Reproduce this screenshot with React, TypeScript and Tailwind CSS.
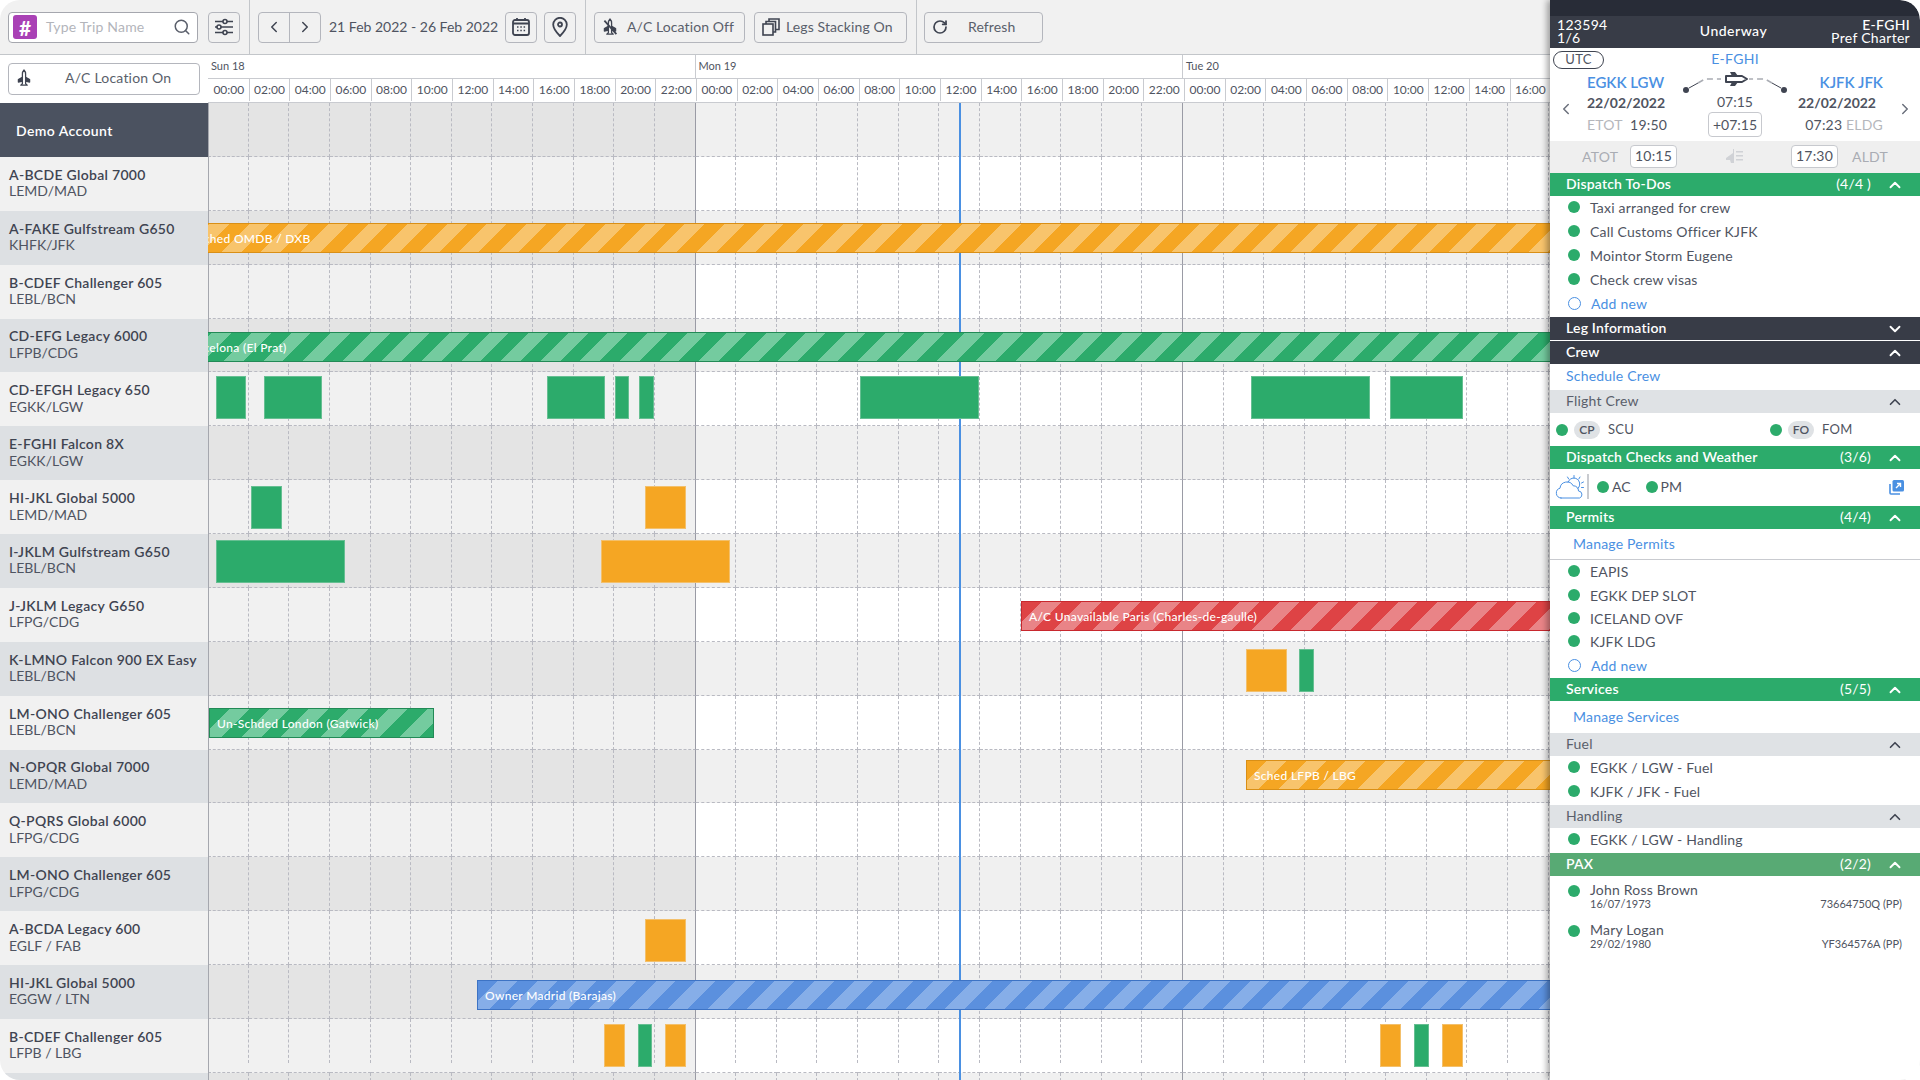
import React from 'react';
import { ChevronDown, ChevronLeft, ChevronRight, ChevronUp, RotateCw, Search } from 'lucide-react';

const aircraft = [
  ['A-BCDE Global 7000', 'LEMD/MAD'],
  ['A-FAKE Gulfstream G650', 'KHFK/JFK'],
  ['B-CDEF Challenger 605', 'LEBL/BCN'],
  ['CD-EFG Legacy 6000', 'LFPB/CDG'],
  ['CD-EFGH Legacy 650', 'EGKK/LGW'],
  ['E-FGHI Falcon 8X', 'EGKK/LGW'],
  ['HI-JKL Global 5000', 'LEMD/MAD'],
  ['I-JKLM Gulfstream G650', 'LEBL/BCN'],
  ['J-JKLM Legacy G650', 'LFPG/CDG'],
  ['K-LMNO Falcon 900 EX Easy', 'LEBL/BCN'],
  ['LM-ONO Challenger 605', 'LEBL/BCN'],
  ['N-OPQR Global 7000', 'LEMD/MAD'],
  ['Q-PQRS Global 6000', 'LFPG/CDG'],
  ['LM-ONO Challenger 605', 'LFPG/CDG'],
  ['A-BCDA Legacy 600', 'EGLF / FAB'],
  ['HI-JKL Global 5000', 'EGGW / LTN'],
  ['B-CDEF Challenger 605', 'LFPB / LBG'],
];

const hours = ['00:00', '02:00', '04:00', '06:00', '08:00', '10:00', '12:00', '14:00', '16:00', '18:00', '20:00', '22:00'];
const columns = Array.from({ length: 34 }, (_, i) => i);

const barStyles = {
  orange: 'bg-[repeating-linear-gradient(135deg,#f5a623_0,#f5a623_14px,#f8c46c_14px,#f8c46c_28px)] border-[#d98f16]',
  green: 'bg-[repeating-linear-gradient(135deg,#2cab6b_0,#2cab6b_14px,#74cb9f_14px,#74cb9f_28px)] border-[#228a56]',
  red: 'bg-[repeating-linear-gradient(135deg,#de4345_0,#de4345_14px,#e98487_14px,#e98487_28px)] border-[#c8282e]',
  blue: 'bg-[repeating-linear-gradient(135deg,#5b90de_0,#5b90de_14px,#86aee8_14px,#86aee8_28px)] border-[#3d73c4]',
};

const blockStyles = {
  orange: 'bg-[#f5a623] border-[#f3c06c]',
  green: 'bg-[#2cab6b] border-[#66bf92]',
};

type Bar = { x: number; w: number; y: number; color: keyof typeof barStyles; label: string };
type Block = { x: number; w: number; y: number; color: keyof typeof blockStyles };

// x is measured from the left of the schedule, y from the top of the row
const bars: Record<number, Bar[]> = {
  2: [{ x: -19, w: 1400, y: 12, color: 'orange', label: 'Sched OMDB / DXB' }],
  4: [{ x: -96, w: 1500, y: 13, color: 'green', label: 'Un-Schded Barcelona (El Prat)' }],
  9: [{ x: 813, w: 560, y: 13, color: 'red', label: 'A/C Unavailable Paris (Charles-de-gaulle)' }],
  11: [{ x: 1, w: 225, y: 12, color: 'green', label: 'Un-Schded London (Gatwick)' }],
  12: [{ x: 1038, w: 320, y: 10, color: 'orange', label: 'Sched LFPB / LBG' }],
  16: [{ x: 269, w: 1100, y: 15, color: 'blue', label: 'Owner Madrid (Barajas)' }],
};

const blocks: Record<number, Block[]> = {
  5: [
    { x: 8, w: 30, y: 4, color: 'green' },
    { x: 56, w: 58, y: 4, color: 'green' },
    { x: 339, w: 58, y: 4, color: 'green' },
    { x: 407, w: 14, y: 4, color: 'green' },
    { x: 431, w: 15, y: 4, color: 'green' },
    { x: 652, w: 119, y: 4, color: 'green' },
    { x: 1043, w: 119, y: 4, color: 'green' },
    { x: 1182, w: 73, y: 4, color: 'green' },
  ],
  7: [
    { x: 43, w: 31, y: 6, color: 'green' },
    { x: 437, w: 41, y: 6, color: 'orange' },
  ],
  8: [
    { x: 8, w: 129, y: 6, color: 'green' },
    { x: 393, w: 129, y: 6, color: 'orange' },
  ],
  10: [
    { x: 1038, w: 41, y: 7, color: 'orange' },
    { x: 1091, w: 15, y: 7, color: 'green' },
  ],
  15: [{ x: 437, w: 41, y: 8, color: 'orange' }],
  17: [
    { x: 396, w: 21, y: 5, color: 'orange' },
    { x: 430, w: 14, y: 5, color: 'green' },
    { x: 457, w: 21, y: 5, color: 'orange' },
    { x: 1172, w: 21, y: 5, color: 'orange' },
    { x: 1206, w: 15, y: 5, color: 'green' },
    { x: 1234, w: 21, y: 5, color: 'orange' },
  ],
};

function PlaneFront({ off = false }: { off?: boolean }) {
  return (
    <svg width="16" height="20" viewBox="0 0 20 22" fill="none" className="shrink-0">
      <path d="M10 1c1.5 1.5 2 3 2 5v12l2 2H6l2-2V6c0-2 .5-3.5 2-5Z" stroke="#3f4451" strokeWidth="1.6" strokeLinejoin="round" />
      <path d="M8 10l-5 3v3l5-1M12 10l5 3v3l-5-1" stroke="#3f4451" strokeWidth="1.6" fill="#3f4451" strokeLinejoin="round" />
      {off && <path d="M3 3l15 17" stroke="#3f4451" strokeWidth="2.2" />}
    </svg>
  );
}

function SlidersIcon() {
  return (
    <svg width="20" height="18" viewBox="0 0 20 18" fill="none" stroke="#3f4451" strokeWidth="1.6">
      <path d="M1 3.5h8M13 3.5h6M1 9h2M7 9h12M1 14.5h8M13 14.5h6" />
      <circle cx="11" cy="3.5" r="2" />
      <circle cx="5" cy="9" r="2" />
      <circle cx="11" cy="14.5" r="2" />
    </svg>
  );
}

function CalendarIcon() {
  return (
    <svg width="18" height="19" viewBox="0 0 18 19" fill="none" stroke="#3f4451">
      <rect x="1" y="3" width="16" height="15" rx="2" strokeWidth="1.8" />
      <path d="M1 6.5h16M5 1v3M13 1v3" strokeWidth="1.8" />
      <path d="M5 10h1.5M8.3 10h1.5M11.6 10h1.5M5 13.5h1.5M8.3 13.5h1.5M11.6 13.5h1.5" strokeWidth="1.4" />
    </svg>
  );
}

function PinIcon() {
  return (
    <svg width="16" height="20" viewBox="0 0 16 20" fill="none" stroke="#3f4451" strokeWidth="1.8">
      <path d="M8 19s-6.8-6.6-6.8-11.4a6.8 6.8 0 0 1 13.6 0C14.8 12.4 8 19 8 19Z" strokeLinejoin="round" />
      <circle cx="8" cy="7.5" r="2" />
    </svg>
  );
}

function StackIcon() {
  return (
    <svg width="18" height="18" viewBox="0 0 18 18" fill="none" stroke="#3f4451" strokeWidth="1.6">
      <rect x="1" y="6" width="10" height="11" />
      <path d="M4 6V3.5h9.5V14H11M7 3.5V1h10v10.5h-3.5" />
    </svg>
  );
}

function SideView() {
  return (
    <svg width="106" height="24" viewBox="0 0 106 24" fill="none">
      <circle cx="4" cy="20" r="3" fill="#3f4451" />
      <circle cx="102" cy="20" r="3" fill="#3f4451" />
      <path d="M7 18l9-5" stroke="#3f4451" />
      <path d="M99 18l-9-5" stroke="#3f4451" />
      <path d="M16 13l7-4h16M90 13l-7-4H67" stroke="#a9acb3" strokeWidth="1.5" strokeDasharray="6 4" />
      <path d="M44 6h16l5 3-5 3H44Z" stroke="#3f4451" strokeWidth="2" fill="#fff" strokeLinejoin="round" />
      <path d="M48 2h5l3 4h-6ZM48 16h5l3-4h-6Z" fill="#3f4451" />
    </svg>
  );
}

function ClimbIcon() {
  return (
    <svg width="18" height="16" viewBox="0 0 18 16" fill="#d0d2d6">
      <path d="M1 10l7-5V1h1v14H6l-1-3-4 0Z" />
      <path d="M11 3h7v1.6h-7ZM11 7h7v1.6h-7ZM11 11h7v1.6h-7Z" />
    </svg>
  );
}

function WeatherIcon() {
  return (
    <svg width="30" height="25" viewBox="0 0 30 25" fill="none" stroke="#4a90e2" strokeWidth="1" strokeLinecap="round" className="shrink-0">
      <path d="M7 24a5 5 0 0 1-1-9.8 7 7 0 0 1 13.2-2.4 5 5 0 0 1 5.3 5.2 3.6 3.6 0 0 1 1 7H7Z" />
      <path d="M14 8.2a6 6 0 0 1 11.6 3 6 6 0 0 1-1.6 3.2" />
      <path d="M20 1.5v2.5M13.5 3l1.2 2M26 3l-1.2 2M29.5 8l-2 1M29.5 13.5h-2" />
    </svg>
  );
}

function OpenIcon() {
  return (
    <svg width="16" height="16" viewBox="0 0 16 16" fill="none">
      <path d="M1 5v9a1 1 0 0 0 1 1h9" stroke="#4a90e2" strokeWidth="1.6" />
      <rect x="3.5" y="1" width="11.5" height="11.5" rx="1.5" fill="#4a90e2" />
      <path d="M7 9l4.5-4.5M8 4.5h3.5V8" stroke="#fff" strokeWidth="1.4" />
    </svg>
  );
}

function ToolButton({ className, children }: { className: string; children: React.ReactNode }) {
  return (
    <button className={`flex h-[31px] shrink-0 items-center rounded border border-[#b4b6bd] bg-[#f1f1f1] pb-[1px] text-[14px] tracking-[0.1px] text-[#5a5f6b] ${className}`}>
      {children}
    </button>
  );
}

function ScheduleRow({ index }: { index: number }) {
  const band = index % 2 === 0;
  return (
    <div className="relative flex h-[53.88px]">
      {columns.map(c => {
        const dayEnd = c === 11 || c === 23;
        return (
          <div
            key={c}
            className={`h-full w-[40.625px] shrink-0 border-b border-dashed border-b-[#b9bac2] ${
              dayEnd ? 'border-r border-r-[#9a9ba5] [border-right-style:solid]' : index === 17 ? '' : 'border-r border-r-[#b9bac2]'
            } ${c < 12 ? (band ? 'bg-[#e4e4e4]' : 'bg-[#f1f1f1]') : band ? 'bg-[#f0f0f0]' : 'bg-white'}`}
          >
            {/* the last full row stops its hour lines short of the bottom */}
            {index === 17 && !dayEnd && <div className="h-[44px] border-r border-dashed border-r-[#b9bac2]" />}
          </div>
        );
      })}
      {(bars[index] || []).map(b => (
        <div
          key={b.label}
          className={`absolute z-10 h-[30px] overflow-hidden whitespace-nowrap border pl-[7px] text-[12px] font-medium leading-[30px] tracking-[0.3px] text-white ${barStyles[b.color]}`}
          style={{ left: b.x, top: b.y, width: b.w }}
        >
          {b.label}
        </div>
      ))}
      {(blocks[index] || []).map(b => (
        <div
          key={b.x}
          className={`absolute z-10 h-[43px] border ${blockStyles[b.color]}`}
          style={{ left: b.x, top: b.y, width: b.w }}
        />
      ))}
    </div>
  );
}

function SectionBar({ title, count, tone, open = true }: { title: string; count?: string; tone: string; open?: boolean }) {
  return (
    <div className={`flex h-[23px] shrink-0 items-center pl-[16px] pr-[16px] text-[14px] font-semibold tracking-[0.2px] text-white ${tone}`}>
      <span className="flex-1 pb-[2px]">{title}</span>
      {count && <span className="mr-[15px] pb-[2px] font-normal">{count}</span>}
      {open ? <ChevronUp size={18} strokeWidth={2.5} /> : <ChevronDown size={18} strokeWidth={2.5} />}
    </div>
  );
}

function SubBar({ title }: { title: string }) {
  return (
    <div className="flex h-[23px] shrink-0 items-center bg-[#dfe2e5] pl-[16px] pr-[16px] text-[14px] tracking-[0.2px] text-[#5a5f6b]">
      <span className="flex-1 pb-[2px]">{title}</span>
      <ChevronUp size={18} strokeWidth={2.2} className="text-[#3f4451]" />
    </div>
  );
}

function Dot({ className = '' }: { className?: string }) {
  return <span className={`h-[12px] w-[12px] shrink-0 rounded-full bg-[#2cab6b] ${className}`} />;
}

function CheckRow({ label, short = false }: { label: string; short?: boolean }) {
  return (
    <div className={`flex items-center pb-[2px] pl-[18px] text-[14px] tracking-[0.2px] text-[#4f5461] ${short ? 'h-[22px]' : 'h-[24px]'}`}>
      <Dot className="mr-[10px]" />
      {label}
    </div>
  );
}

function AddNew() {
  return (
    <div className="flex h-[24px] items-center pb-[2px] pl-[18px] text-[14px] tracking-[0.2px] text-[#4a90e2]">
      <span className="mr-[10px] h-[13px] w-[13px] rounded-full border border-[#4a90e2]" />
      Add new
    </div>
  );
}

function Passenger({ name, dob, doc }: { name: string; dob: string; doc: string }) {
  return (
    <div className="flex h-[40px] items-start pl-[18px] pr-[18px] pt-[7px] text-[#4f5461]">
      <Dot className="mr-[10px] mt-[2px]" />
      <div className="flex-1 leading-none">
        <div className="text-[14px] tracking-[0.2px]">{name}</div>
        <div className="mt-[1px] text-[11px]">{dob}</div>
      </div>
      <div className="mt-[15px] text-[11px] leading-none">{doc}</div>
    </div>
  );
}

function TripPanel() {
  return (
    <aside className="relative z-20 flex h-full w-[370px] shrink-0 flex-col overflow-hidden rounded-tr-[20px] bg-white shadow-[-3px_0_6px_rgba(0,0,0,0.35)]">
      <div className="h-[16px] shrink-0 bg-[#282c37]" />
      <div className="flex h-[32px] shrink-0 items-center bg-[#383c47] px-[7px] pb-[2px] pr-[10px] text-[14px] leading-[13px] tracking-[0.3px] text-white">
        <div className="flex-1">
          <div>123594</div>
          <div>1/6</div>
        </div>
        <div className="mb-[2px] flex-1 text-center font-medium tracking-[0.5px]">Underway</div>
        <div className="flex-1 text-right">
          <div className="font-medium">E-FGHI</div>
          <div>Pref Charter</div>
        </div>
      </div>

      <div className="relative flex h-[21px] shrink-0 items-center justify-center text-[14px] tracking-[0.3px] text-[#4a90e2]">
        <span className="absolute left-[3px] top-[3px] flex h-[18px] w-[51px] items-center justify-center rounded-full border border-[#3f4451] text-[13px] text-[#4f5461]">UTC</span>
        E-FGHI
      </div>
      <div className="grid h-[72px] shrink-0 grid-cols-[37px_108px_minmax(0,1fr)_108px_37px] text-[#4f5461]">
        <div className="flex items-center justify-center pr-[6px] pt-[8px] text-[#6b707c]">
          <ChevronLeft size={18} />
        </div>
        <div className="pt-[4px]">
          <div className="text-[15px] font-semibold leading-[18px] text-[#4a90e2]">EGKK LGW</div>
          <div className="mt-[3px] text-[14px] font-bold leading-[18px]">22/02/2022</div>
          <div className="mt-[4px] text-[14px] leading-[18px] tracking-[0.2px]">
            <span className="text-[#b5b7bc]">ETOT</span> <span className="ml-[4px]">19:50</span>
          </div>
        </div>
        <div className="flex flex-col items-center">
          <div className="mt-[1px] h-[24px] shrink-0"><SideView /></div>
          <div className="-mt-[1px] text-[14px] leading-[18px]">07:15</div>
          <div className="mt-[1px] flex h-[25px] w-[54px] shrink-0 items-center justify-center rounded border border-[#c7c9ce] text-[14px]">+07:15</div>
        </div>
        <div className="pt-[4px] text-right">
          <div className="text-[15px] font-semibold leading-[18px] text-[#4a90e2]">KJFK JFK</div>
          <div className="mt-[3px] pr-[7px] text-[14px] font-bold leading-[18px]">22/02/2022</div>
          <div className="mt-[4px] text-[14px] leading-[18px] tracking-[0.2px]">
            07:23 <span className="text-[#b5b7bc]">ELDG</span>
          </div>
        </div>
        <div className="flex items-center justify-center pl-[6px] pt-[8px] text-[#6b707c]">
          <ChevronRight size={18} />
        </div>
      </div>
      <div className="flex h-[32px] shrink-0 items-center bg-[#efefef] px-[32px] pb-[2px] text-[14px] tracking-[0.2px] text-[#a9acb3]">
        <span className="w-[36px]">ATOT</span>
        <span className="ml-[12px] flex h-[23px] w-[47px] items-center justify-center rounded border border-[#c7c9ce] bg-white pb-[1px] text-[#4f5461]">10:15</span>
        <span className="flex flex-1 justify-center"><ClimbIcon /></span>
        <span className="flex h-[23px] w-[47px] items-center justify-center rounded border border-[#c7c9ce] bg-white pb-[1px] text-[#4f5461]">17:30</span>
        <span className="ml-[14px] w-[36px]">ALDT</span>
      </div>

      <SectionBar title="Dispatch To-Dos" count="(4/4 )" tone="bg-[#2cab6b]" />
      <div className="h-[121px] shrink-0">
        <CheckRow label="Taxi arranged for crew" />
        <CheckRow label="Call Customs Officer KJFK" />
        <CheckRow label="Mointor Storm Eugene" />
        <CheckRow label="Check crew visas" />
        <AddNew />
      </div>
      <SectionBar title="Leg Information" tone="bg-[#383c47]" open={false} />
      <div className="h-px shrink-0" />
      <SectionBar title="Crew" tone="bg-[#383c47]" />
      <div className="flex h-[26px] shrink-0 items-center pb-[3px] pl-[16px] text-[14px] tracking-[0.2px] text-[#4a90e2]">Schedule Crew</div>
      <SubBar title="Flight Crew" />
      <div className="flex h-[33px] shrink-0 items-center pl-[6px] text-[13px] text-[#4f5461]">
        <div className="flex w-[214px] items-center">
          <Dot />
          <span className="ml-[6px] flex h-[18px] w-[26px] items-center justify-center rounded-full bg-[#dfe2e5] text-[12px] font-semibold">CP</span>
          <span className="ml-[8px] tracking-[0.3px]">SCU</span>
        </div>
        <div className="flex items-center">
          <Dot />
          <span className="ml-[6px] flex h-[18px] w-[26px] items-center justify-center rounded-full bg-[#dfe2e5] text-[12px] font-semibold">FO</span>
          <span className="ml-[8px] tracking-[0.3px]">FOM</span>
        </div>
      </div>
      <SectionBar title="Dispatch Checks and Weather" count="(3/6)" tone="bg-[#2cab6b]" />
      <div className="flex h-[37px] shrink-0 items-center pb-[2px] pl-[4px] pr-[15px] text-[14px] text-[#4f5461]">
        <WeatherIcon />
        <span className="ml-[3px] mr-[8px] h-[25px] w-[2px] bg-[#c9cbd0]" />
        <Dot />
        <span className="ml-[3px]">AC</span>
        <Dot className="ml-[15px]" />
        <span className="ml-[3px] flex-1">PM</span>
        <OpenIcon />
      </div>
      <SectionBar title="Permits" count="(4/4)" tone="bg-[#2cab6b]" />
      <div className="flex h-[31px] shrink-0 items-center border-b border-[#c9cbd0] pb-[2px] pl-[23px] text-[14px] tracking-[0.2px] text-[#4a90e2]">Manage Permits</div>
      <div className="h-[118px] shrink-0">
        <CheckRow label="EAPIS" />
        <CheckRow label="EGKK DEP SLOT" />
        <CheckRow label="ICELAND OVF" short />
        <CheckRow label="KJFK LDG" />
        <AddNew />
      </div>
      <SectionBar title="Services" count="(5/5)" tone="bg-[#2cab6b]" />
      <div className="flex h-[32px] shrink-0 items-center pb-[2px] pl-[23px] text-[14px] tracking-[0.2px] text-[#4a90e2]">Manage Services</div>
      <SubBar title="Fuel" />
      <div className="h-[49px] shrink-0">
        <CheckRow label="EGKK / LGW - Fuel" />
        <CheckRow label="KJFK / JFK - Fuel" />
      </div>
      <SubBar title="Handling" />
      <div className="h-[25px] shrink-0">
        <CheckRow label="EGKK / LGW - Handling" />
      </div>
      <SectionBar title="PAX" count="(2/2)" tone="bg-[#58aa74]" />
      <Passenger name="John Ross Brown" dob="16/07/1973" doc="73664750Q (PP)" />
      <Passenger name="Mary Logan" dob="29/02/1980" doc="YF364576A (PP)" />
    </aside>
  );
}

export default function App() {
  return (
    <div className="flex h-screen w-[1920px] overflow-hidden rounded-[20px] bg-white font-[Lato,sans-serif]">
      <main className="flex h-full w-[1550px] shrink-0 flex-col overflow-hidden">
        <header className="flex h-[55px] shrink-0 items-center border-b border-[#c3c6ca] bg-[#f1f1f1]">
          <div className="ml-[8px] flex h-[31px] w-[190px] shrink-0 items-center rounded border border-[#a5a7ae] bg-white pl-[4px] pr-[6px]">
            <span className="flex h-[24px] w-[24px] items-center justify-center rounded-[3px] bg-[#a941b5] text-[21px] font-bold leading-none text-white">#</span>
            <span className="ml-[9px] flex-1 pb-[1px] text-[14px] tracking-[0.2px] text-[#b3b5bb]">Type Trip Name</span>
            <Search size={18} className="text-[#5a5f6b]" />
          </div>
          <ToolButton className="ml-[10px] w-[32px] justify-center"><SlidersIcon /></ToolButton>
          <div className="ml-[9px] h-full w-px shrink-0 bg-[#c3c6ca]" />
          <div className="ml-[8px] flex h-[31px] w-[63px] shrink-0 items-center rounded border border-[#b4b6bd] text-[#3f4451]">
            <span className="flex h-full flex-1 items-center justify-center border-r border-[#b4b6bd]"><ChevronLeft size={18} /></span>
            <span className="flex h-full flex-1 items-center justify-center"><ChevronRight size={18} /></span>
          </div>
          <span className="ml-[8px] w-[176px] shrink-0 whitespace-nowrap pb-[1px] text-[14px] text-[#4f5461]">21 Feb 2022 - 26 Feb 2022</span>
          <ToolButton className="w-[32px] justify-center"><CalendarIcon /></ToolButton>
          <ToolButton className="ml-[7px] w-[32px] justify-center"><PinIcon /></ToolButton>
          <div className="ml-[9px] h-full w-px shrink-0 bg-[#c3c6ca]" />
          <ToolButton className="ml-[8px] w-[151px] pl-[7px]">
            <PlaneFront off />
            <span className="ml-[9px]">A/C Location Off</span>
          </ToolButton>
          <ToolButton className="ml-[9px] w-[153px] pl-[7px]">
            <StackIcon />
            <span className="ml-[6px]">Legs Stacking On</span>
          </ToolButton>
          <div className="ml-[9px] h-full w-px shrink-0 bg-[#c3c6ca]" />
          <ToolButton className="ml-[7px] w-[119px] pl-[7px]">
            <RotateCw size={16} strokeWidth={2.6} className="text-[#3f4451]" />
            <span className="ml-[20px]">Refresh</span>
          </ToolButton>
        </header>

        <div className="flex min-h-0 flex-1">
          <div className="flex w-[208px] shrink-0 flex-col">
            <div className="flex h-[48px] shrink-0 items-center bg-white pl-[8px]">
              <button className="flex h-[32px] w-[192px] items-center rounded border border-[#b4b6bd] bg-white pb-[3px] pl-[7px] text-[14px] tracking-[0.2px] text-[#5a5f6b]">
                <PlaneFront />
                <span className="ml-[33px]">A/C Location On</span>
              </button>
            </div>
            <div className="flex h-[53.88px] shrink-0 items-center bg-[#4b5260] pl-[16px] pt-[2px] text-[14px] font-semibold tracking-[0.4px] text-white">
              Demo Account
            </div>
            {aircraft.map(([name, base], i) => (
              <div
                key={name + base}
                className={`flex h-[53.88px] shrink-0 flex-col justify-center pb-[1px] pl-[9px] text-[14px] leading-[16.5px] text-[#3f4451] ${i % 2 === 0 ? 'bg-[#f1f1f1]' : 'bg-[#dde0e3]'}`}
              >
                <div className="whitespace-nowrap font-semibold tracking-[0.3px]">{name}</div>
                <div className="text-[#4f5461]">{base}</div>
              </div>
            ))}
            <div className="flex-1 bg-[#dde0e3]" />
          </div>

          <div className="relative min-w-0 flex-1 overflow-hidden">
            <div className="absolute bottom-0 left-0 top-[48px] z-[6] w-px bg-[#a5a7ae]" />
            <div className="flex h-[24px] border-b border-[#c9cbd0] bg-white text-[11px] text-[#4f5461]">
              {['Sun 18', 'Mon 19', 'Tue 20'].map(d => (
                <div key={d} className="flex w-[487.5px] shrink-0 items-center border-r border-[#c9cbd0] pl-[3px]">{d}</div>
              ))}
            </div>
            <div className="flex h-[24px] border-b border-[#c9cbd0] bg-white pb-[1px] pl-[1px] text-[12px] text-[#4f5461]">
              {/* Tue stops at 16:00, the rest of the day sits behind the trip panel */}
              {[...hours, ...hours, ...hours.slice(0, 9)].map((h, i) => (
                <div key={i} className="flex w-[40.68px] shrink-0 items-center justify-center border-r border-[#c9cbd0]">{h}</div>
              ))}
            </div>
            <div className="relative">
              <div className="absolute bottom-0 left-[751px] top-0 z-[5] w-[2px] bg-[#4a90e2]" />
              {Array.from({ length: 19 }, (_, i) => (
                <ScheduleRow key={i} index={i} />
              ))}
            </div>
          </div>
        </div>
      </main>
      <TripPanel />
    </div>
  );
}
